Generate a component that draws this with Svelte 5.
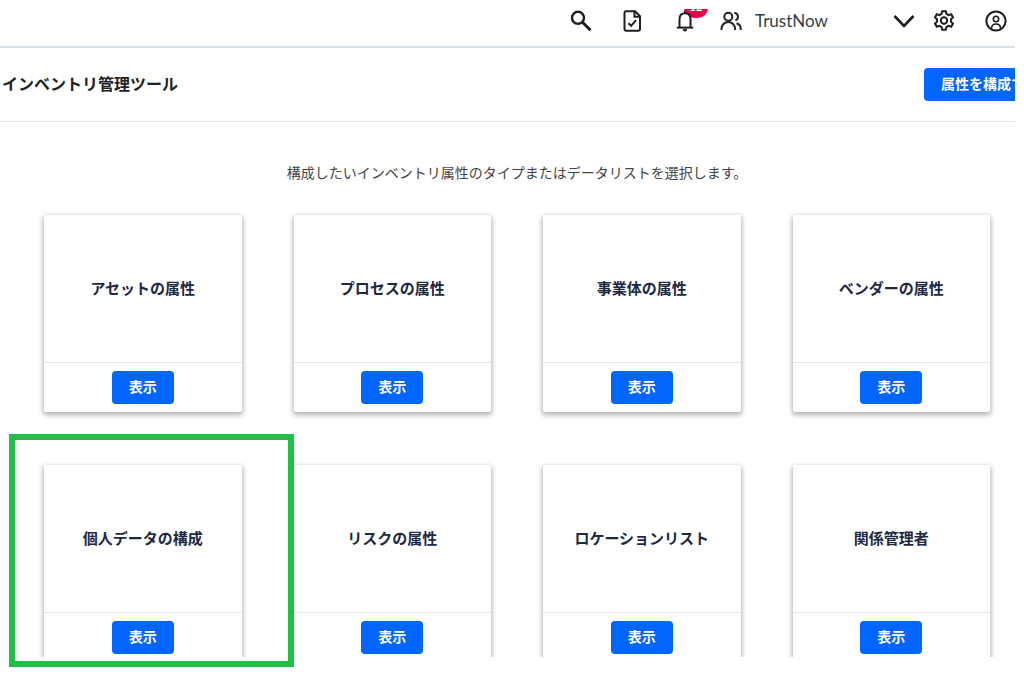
<script lang="ts">
  type Card = { title: string };

  const cards: Card[] = [
    { title: 'アセットの属性' },
    { title: 'プロセスの属性' },
    { title: '事業体の属性' },
    { title: 'ベンダーの属性' },
    { title: '個人データの構成' },
    { title: 'リスクの属性' },
    { title: 'ロケーションリスト' },
    { title: '関係管理者' }
  ];

  let organization = $state('TrustNow');
</script>

<div class="page">
  <div class="shell">
    <header class="topbar">
      <button class="icon-btn" aria-label="検索">
        <svg viewBox="0 0 22 22">
          <circle cx="8" cy="7.8" r="6" stroke-width="2.4" />
          <path d="M12.5 12.3 20.5 20.3" stroke-width="3" />
        </svg>
      </button>
      <button class="icon-btn" aria-label="タスク">
        <svg viewBox="0 0 22 22">
          <path d="M4 1.2h9l5 5v12.8a1.8 1.8 0 0 1-1.8 1.8H4.3A1.8 1.8 0 0 1 2.500 19V2.700A1.500 1.500 0 0 1 4 1.200z" />
          <path d="M12.500 1.500v5.200H18" />
          <path d="m6.500 13.200 2.600 2.600 5-5.600" />
        </svg>
      </button>
      <button class="icon-btn bell" aria-label="通知">
        <span class="badge-clip"><span class="badge">12</span></span>
        <svg viewBox="0 0 22 22">
          <path class="bell-body" d="M5.500 17.200V9.200c0-3.700 2.300-5.900 5.500-5.900s5.500 2.200 5.500 5.900v8" />
          <path d="M2.800 17.600h16.400" />
          <path d="M11 1v2.300" />
          <path d="M9.300 19.400h3.400a1.700 1.700 0 0 1-3.400 0z" fill="currentColor" stroke-width="1" />
        </svg>
      </button>
      <div class="org">
        <svg viewBox="0 0 22 22">
          <circle cx="8.300" cy="6.700" r="4" />
          <path d="M1.500 20v-1.200a6.800 6.800 0 0 1 13.600 0V20" />
          <path d="M14.200 3a3.800 3.800 0 0 1 1.200 7.400" />
          <path d="M16.500 13.300c2.600.8 4.200 2.900 4.200 5.500V20" />
        </svg>
        <div class="select-wrap">
          <select bind:value={organization} aria-label="組織">
            <option value="TrustNow">TrustNow</option>
          </select>
          <svg class="chevron" viewBox="0 0 22 22">
            <path d="m1.500 6 9.500 9.800L20.500 6" stroke-width="2.600" />
          </svg>
        </div>
      </div>
      <button class="icon-btn gear" aria-label="設定">
        <svg viewBox="0 0 22 22">
          <path d="M9.200 1.200h3.600l.6 2.700 2.100 1.200 2.700-.8 1.800 3.100-2 1.900v2.400l2 1.900-1.800 3.100-2.700-.8-2.100 1.200-.6 2.700H9.200l-.6-2.700-2.100-1.200-2.700.8L2 13.600l2-1.900V9.300L2 7.400l1.800-3.100 2.700.8 2.100-1.200z" />
          <circle cx="11" cy="10.500" r="3.200" />
        </svg>
      </button>
      <button class="icon-btn" aria-label="プロフィール">
        <svg viewBox="0 0 22 22">
          <circle cx="11" cy="11" r="9.600" />
          <circle cx="11" cy="9" r="2.700" stroke-width="1.600" />
          <path d="M6.600 18.800v-1c0-2.400 1.900-3.800 4.400-3.800s4.400 1.400 4.400 3.800v1" stroke-width="1.600" />
        </svg>
      </button>
    </header>

    <div class="title-row">
      <h1>インベントリ管理ツール</h1>
      <button class="primary">属性を構成する</button>
    </div>

    <main>
      <p>構成したいインベントリ属性のタイプまたはデータリストを選択します。</p>
      <div class="grid">
        {#each cards as card}
          <section class="card">
            <h2>{card.title}</h2>
            <div class="card-footer">
              <button class="primary">表示</button>
            </div>
          </section>
        {/each}
      </div>
    </main>
  </div>
  <div class="highlight"></div>
</div>

<style>
  :global(body) {
    margin: 0;
    background: #fff;
  }

  .page {
    position: relative;
    box-sizing: border-box;
    height: 100vh;
    padding: 0 9px 32px 0;
    overflow: hidden;
    font-family: Lato, 'Noto Sans CJK JP', sans-serif;
    color: #222;
  }

  .shell {
    height: 100%;
    overflow: hidden;
  }

  button {
    font-family: inherit;
    cursor: pointer;
  }

  svg {
    display: block;
    width: 22px;
    height: 22px;
    fill: none;
    stroke: currentColor;
    stroke-width: 2;
  }

  /* Top bar */
  .topbar {
    display: flex;
    align-items: center;
    justify-content: flex-end;
    gap: 30px;
    height: 42px;
    padding: 0 8px 4px 0;
    border-bottom: 2px solid #d9e1ea;
  }

  .icon-btn {
    position: relative;
    padding: 0;
    border: 0;
    background: none;
    color: #1f1f1f;
  }

  .bell svg {
    position: relative;
  }

  .bell-body {
    fill: #fff;
  }

  .badge-clip {
    position: absolute;
    top: -1px;
    left: 10px;
    display: flex;
    align-items: flex-end;
    width: 24px;
    height: 9px;
    overflow: hidden;
  }

  .badge {
    width: 24px;
    height: 20px;
    border-radius: 10px;
    background: #eb0045;
    color: #fff;
    font-size: 11px;
    font-weight: 700;
    line-height: 18px;
    text-align: center;
  }

  .org {
    display: flex;
    align-items: center;
    gap: 13px;
    margin-left: -6px;
  }

  .select-wrap {
    display: grid;
    align-items: center;
    width: 160px;
  }

  .select-wrap > * {
    grid-area: 1 / 1;
  }

  select {
    appearance: none;
    width: 100%;
    padding: 0;
    border: 0;
    background: none;
    color: #333f48;
    font-family: inherit;
    font-size: 17px;
    line-height: 24px;
  }

  .chevron {
    justify-self: end;
    color: #1a1a1a;
    pointer-events: none;
  }

  .gear {
    margin-left: -12px;
  }

  /* Title row */
  .title-row {
    display: flex;
    align-items: center;
    justify-content: space-between;
    height: 73px;
    padding-left: 2px;
    border-bottom: 1px solid #e5e5e5;
    overflow: hidden;
  }

  h1 {
    margin: 0;
    padding-bottom: 2px;
    font-size: 16px;
    font-weight: 600;
    line-height: 24px;
    color: #222;
  }

  .title-row .primary {
    margin-right: -41px;
  }

  .primary {
    height: 33px;
    padding: 0 17px 2px;
    border: 0;
    border-radius: 4px;
    background: #0066ff;
    color: #fff;
    font-size: 14px;
    font-weight: 700;
    line-height: 20px;
    white-space: nowrap;
  }

  main {
    padding: 40px 25px 0 44px;
  }

  p {
    margin: 0 0 32px;
    font-size: 14px;
    line-height: 21px;
    text-align: center;
    color: #444;
  }

  .grid {
    display: grid;
    grid-template-columns: repeat(4, 1fr);
    gap: 53px 52px;
  }

  .card {
    display: flex;
    flex-direction: column;
    height: 197px;
    border-radius: 2px;
    background: #fff;
    box-shadow: 0 2px 5px 1px rgba(0, 0, 0, 0.3);
  }

  h2 {
    display: flex;
    flex: 1;
    align-items: center;
    justify-content: center;
    margin: 0;
    padding-bottom: 2px;
    font-size: 15px;
    font-weight: 600;
    color: #1d2842;
  }

  .card-footer {
    display: flex;
    justify-content: center;
    padding: 8px 0;
    border-top: 1px solid #e5e5e5;
  }

  /* Callout frame around the first card of the second row */
  .highlight {
    position: absolute;
    top: 434px;
    bottom: 22px;
    left: 9px;
    box-sizing: border-box;
    width: 285px;
    border: 6px solid #21bf48;
    pointer-events: none;
  }
</style>
